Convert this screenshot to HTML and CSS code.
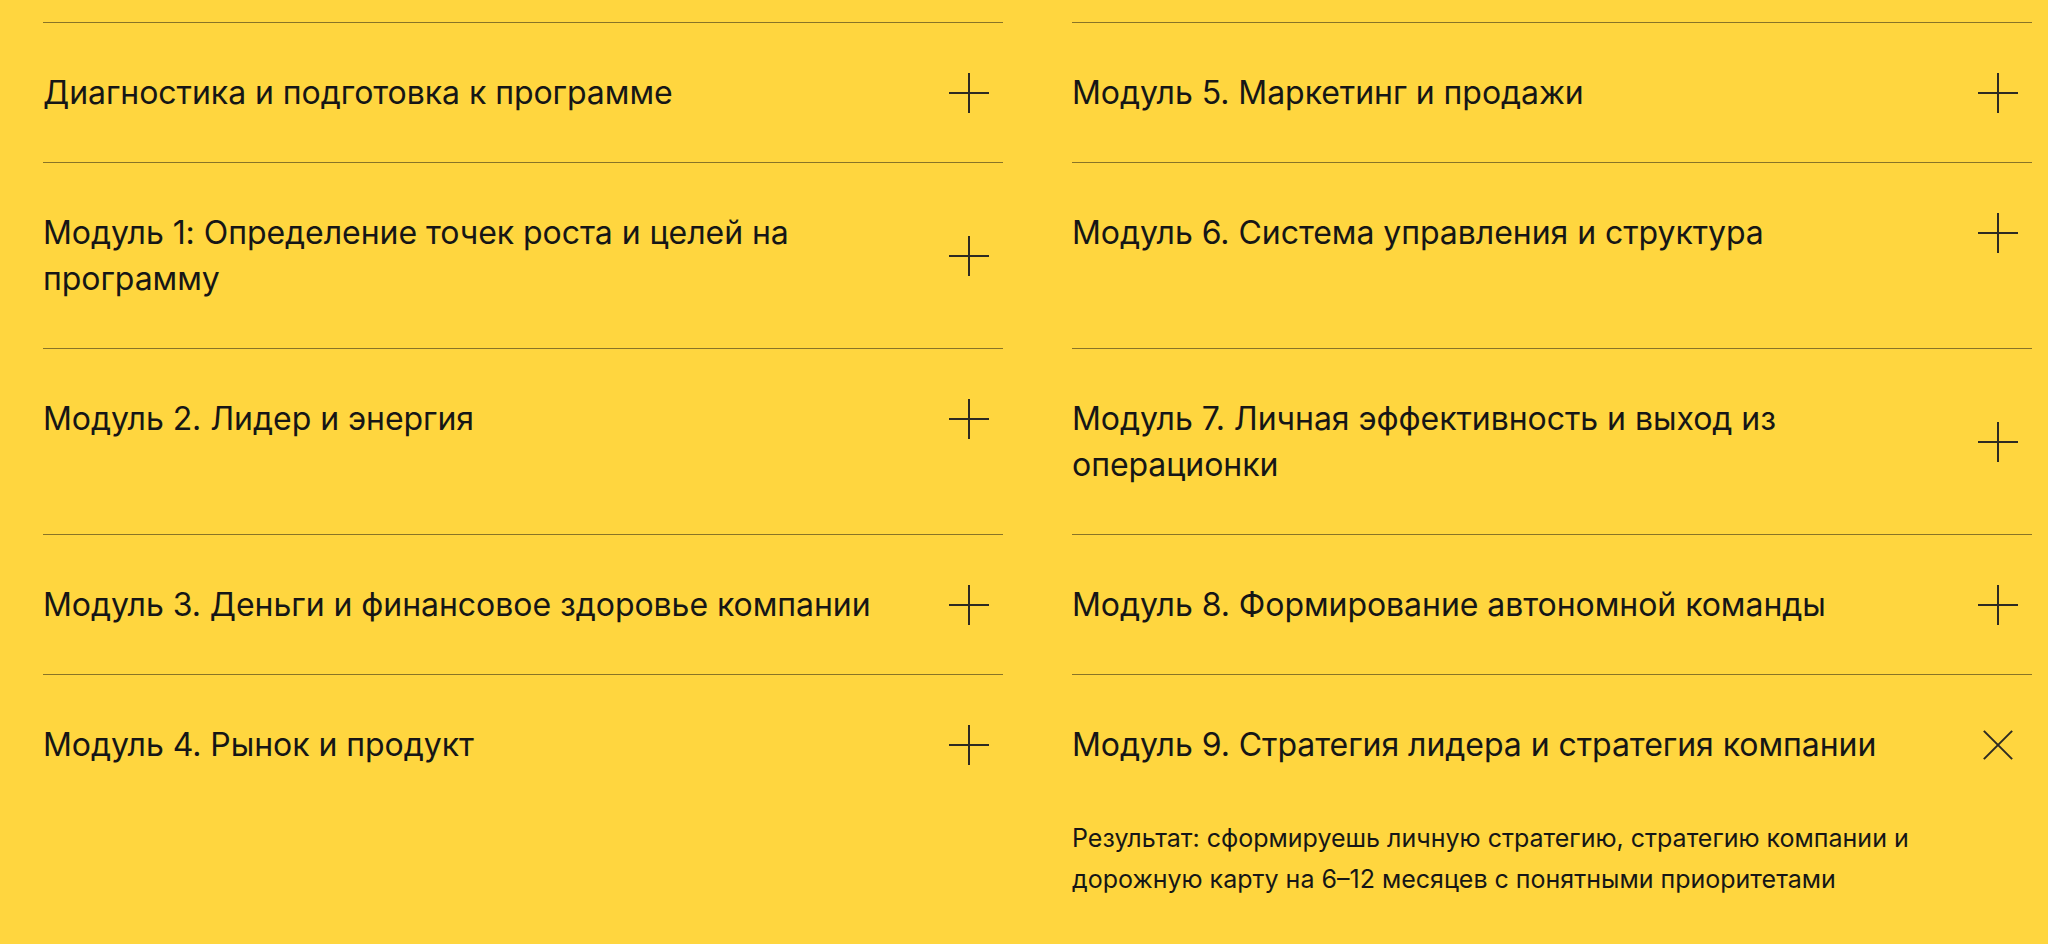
FILE: index.html
```html
<!DOCTYPE html>
<html lang="ru">
<head>
<meta charset="utf-8">
<title>Программа</title>
<link rel="stylesheet" href="styles.css">
</head>
<body>
<section class="program">
  <div class="modules">
    <div class="module">
      <div class="module-head">
        <h3 class="module-title">Диагностика и подготовка к программе</h3>
        <span class="toggle" aria-hidden="true"></span>
      </div>
    </div>
    <div class="module">
      <div class="module-head">
        <h3 class="module-title">Модуль 5. Маркетинг и продажи</h3>
        <span class="toggle" aria-hidden="true"></span>
      </div>
    </div>
    <div class="module">
      <div class="module-head">
        <h3 class="module-title">Модуль 1: Определение точек роста и целей на программу</h3>
        <span class="toggle" aria-hidden="true"></span>
      </div>
    </div>
    <div class="module">
      <div class="module-head">
        <h3 class="module-title">Модуль 6. Система управления и структура</h3>
        <span class="toggle" aria-hidden="true"></span>
      </div>
    </div>
    <div class="module">
      <div class="module-head">
        <h3 class="module-title">Модуль 2. Лидер и энергия</h3>
        <span class="toggle" aria-hidden="true"></span>
      </div>
    </div>
    <div class="module">
      <div class="module-head">
        <h3 class="module-title">Модуль 7. Личная эффективность и выход из операционки</h3>
        <span class="toggle" aria-hidden="true"></span>
      </div>
    </div>
    <div class="module">
      <div class="module-head">
        <h3 class="module-title">Модуль 3. Деньги и финансовое здоровье компании</h3>
        <span class="toggle" aria-hidden="true"></span>
      </div>
    </div>
    <div class="module">
      <div class="module-head">
        <h3 class="module-title">Модуль 8. Формирование автономной команды</h3>
        <span class="toggle" aria-hidden="true"></span>
      </div>
    </div>
    <div class="module">
      <div class="module-head">
        <h3 class="module-title">Модуль 4. Рынок и продукт</h3>
        <span class="toggle" aria-hidden="true"></span>
      </div>
    </div>
    <div class="module is-open">
      <div class="module-head">
        <h3 class="module-title">Модуль 9. Стратегия лидера и стратегия компании</h3>
        <span class="toggle" aria-hidden="true"></span>
      </div>
      <p class="module-body">Результат: сформируешь личную стратегию, стратегию компании и дорожную карту на 6–12 месяцев с понятными приоритетами</p>
    </div>
  </div>
</section>
</body>
</html>
```
FILE: styles.css
```css
html, body {
  margin: 0;
  padding: 0;
}

body {
  background: #ffd63f;
  color: #161616;
  font-family: Inter, "Noto Sans", Arial, sans-serif;
  -webkit-font-smoothing: antialiased;
}

.program {
  padding: 22px 16px 0 43px;
}

.modules {
  display: grid;
  grid-template-columns: 960px 960px;
  column-gap: 69px;
}

.module {
  border-top: 1px solid rgba(40, 36, 20, 0.55);
}

.module-head {
  display: flex;
  align-items: center;
  justify-content: space-between;
  gap: 48px;
  padding: 46.5px 14px 46.5px 0;
}

.module-title {
  margin: 0;
  max-width: 860px;
  font-size: 32px;
  font-weight: 400;
  line-height: 46px;
  letter-spacing: -0.05px;
}

.toggle {
  position: relative;
  flex: 0 0 40px;
  width: 40px;
  height: 40px;
}

.toggle::before,
.toggle::after {
  content: "";
  position: absolute;
  background: #2e2b22;
}

.toggle::before {
  left: 0;
  right: 0;
  top: 19px;
  height: 2px;
}

.toggle::after {
  top: 0;
  bottom: 0;
  left: 19px;
  width: 2px;
}

.is-open .toggle {
  transform: rotate(45deg);
}

.module-body {
  margin: 0;
  padding: 4px 0 0;
  max-width: 880px;
  font-size: 25px;
  line-height: 41px;
  letter-spacing: 0;
}
```
